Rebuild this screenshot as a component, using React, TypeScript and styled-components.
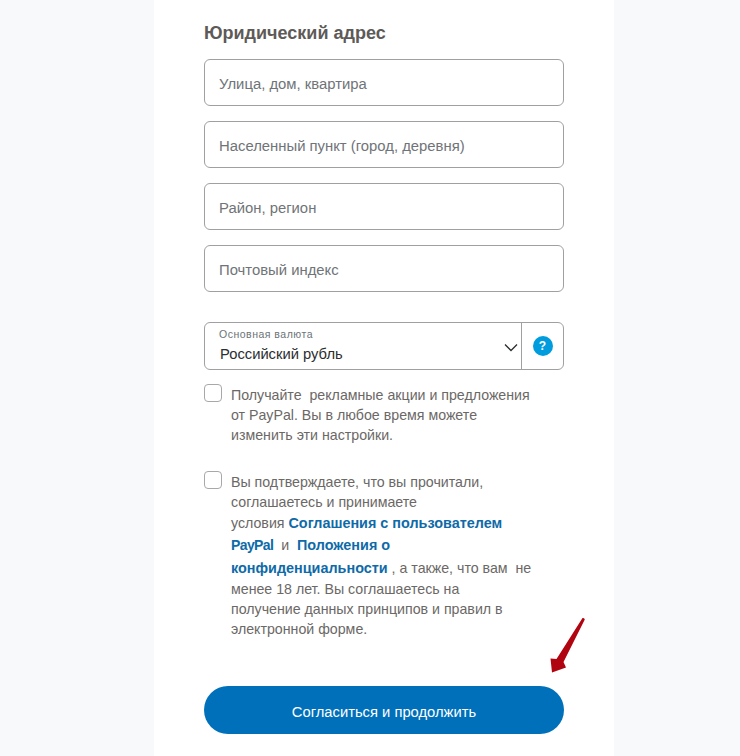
import React from "react";
import styled, { createGlobalStyle } from "styled-components";

const Global = createGlobalStyle`
  html, body { margin: 0; padding: 0; background: #f7f9fb; }
  body { font-family: "Liberation Sans", Arial, sans-serif; }
`;

const Page = styled.div`
  position: relative;
  width: 740px;
  height: 756px;
  overflow: hidden;
  display: flex;
  padding-left: 154px;
  box-sizing: border-box;
`;

const Panel = styled.main`
  width: 460px;
  height: 756px;
  box-sizing: border-box;
  background: #fff;
  padding: 22px 50px 0;
  display: flex;
  flex-direction: column;
`;

const Title = styled.h2`
  margin: 0 0 15px;
  height: 22px;
  font-size: 18px;
  line-height: 22px;
  font-weight: 700;
  color: #5d5a58;
`;

const Fields = styled.div`
  display: flex;
  flex-direction: column;
  gap: 15px;
`;

const Field = styled.div`
  height: 47px;
  box-sizing: border-box;
  border: 1px solid #a0a0a0;
  border-radius: 6px;
  padding: 2px 14px 0;
  display: flex;
  align-items: center;
  font-size: 14.85px;
  color: #6f7478;
`;

const Select = styled.div`
  margin-top: 30px;
  height: 48px;
  box-sizing: border-box;
  border: 1px solid #a0a0a0;
  border-radius: 6px;
  display: flex;
`;

const SelectMain = styled.div`
  flex: 1;
  padding: 5px 0 0 14px;
  border-right: 1px solid #a0a0a0;
  position: relative;
`;

const SelectLabel = styled.div`
  font-size: 10.5px;
  line-height: 13px;
  color: #6c7378;
  letter-spacing: 0.5px;
`;

const SelectValue = styled.div`
  margin-top: 4px;
  padding-left: 1px;
  font-size: 14.75px;
  line-height: 18px;
  color: #2c2e2f;
`;

const Chevron = styled.svg`
  position: absolute;
  right: 3px;
  top: 20px;
`;

const HelpCell = styled.div`
  width: 41px;
  display: flex;
  align-items: center;
  justify-content: center;
`;

const Help = styled.div`
  width: 20px;
  height: 20px;
  border-radius: 50%;
  background: #009cde;
  color: #fff;
  font-size: 12px;
  font-weight: 700;
  line-height: 20px;
  text-align: center;
`;

const CheckRow = styled.div<{ $top: number }>`
  margin-top: ${(p) => p.$top}px;
  display: flex;
  gap: 9px;
  align-items: flex-start;
`;

const Box = styled.div`
  width: 18px;
  height: 18px;
  flex: none;
  box-sizing: border-box;
  border: 1px solid #a8a8a8;
  border-radius: 4px;
  background: #fff;
`;

const CheckText = styled.p`
  margin: 1px 0 0;
  width: 320px;
  font-size: 14.2px;
  line-height: 20px;
  color: #6b6866;
  white-space: pre-wrap;
`;

const Link = styled.a<{ $leading: number }>`
  font-weight: 700;
  font-size: 14.4px;
  line-height: ${(p) => p.$leading}px;
  color: #0e6aa8;
`;

const LatinName = styled.span`
  font-size: 14px;
  letter-spacing: -0.6px;
`;

const Submit = styled.button`
  margin-top: 47px;
  width: 360px;
  height: 48px;
  flex: none;
  border: 0;
  border-radius: 24px;
  padding: 4px 0 0;
  background: #0070ba;
  color: #fff;
  font-family: inherit;
  font-size: 14.75px;
`;

const Arrow = styled.svg`
  position: absolute;
  left: 545px;
  top: 612px;
`;

export default function App() {
  return (
    <Page>
      <Global />
      <Panel>
        <Title>Юридический адрес</Title>
        <Fields>
          <Field>Улица, дом, квартира</Field>
          <Field>Населенный пункт (город, деревня)</Field>
          <Field>Район, регион</Field>
          <Field>Почтовый индекс</Field>
        </Fields>
        <Select>
          <SelectMain>
            <SelectLabel>Основная валюта</SelectLabel>
            <SelectValue>Российский рубль</SelectValue>
            <Chevron width="14" height="9" viewBox="0 0 14 9" fill="none">
              <path d="M1 1.5 L7 7.5 L13 1.5" stroke="#2c2e2f" strokeWidth="1.3" />
            </Chevron>
          </SelectMain>
          <HelpCell>
            <Help>?</Help>
          </HelpCell>
        </Select>
        <CheckRow $top={14}>
          <Box />
          <CheckText>
            Получайте  рекламные акции и предложения{"\n"}от PayPal. Вы в любое время можете{"\n"}изменить эти настройки.
          </CheckText>
        </CheckRow>
        <CheckRow $top={26}>
          <Box />
          <CheckText>
            Вы подтверждаете, что вы прочитали,{"\n"}соглашаетесь и принимаете{"\n"}условия <Link $leading={22}>Соглашения с пользователем{"\n"}<LatinName>PayPal</LatinName></Link>  и  <Link $leading={22.5}>Положения о{"\n"}конфиденциальности</Link> , а также, что вам  не{"\n"}менее 18 лет. Вы соглашаетесь на{"\n"}получение данных принципов и правил в{"\n"}электронной форме.
          </CheckText>
        </CheckRow>
        <Submit>Согласиться и продолжить</Submit>
      </Panel>
      <Arrow width="42" height="66" viewBox="0 0 42 66">
        <path d="M37.5 6 Q39.5 5.5 39.8 7.5 L18.5 50 L21 55.5 L7 60.5 L5.5 46.5 L11.5 47 Z" fill="#b00510" />
      </Arrow>
    </Page>
  );
}
